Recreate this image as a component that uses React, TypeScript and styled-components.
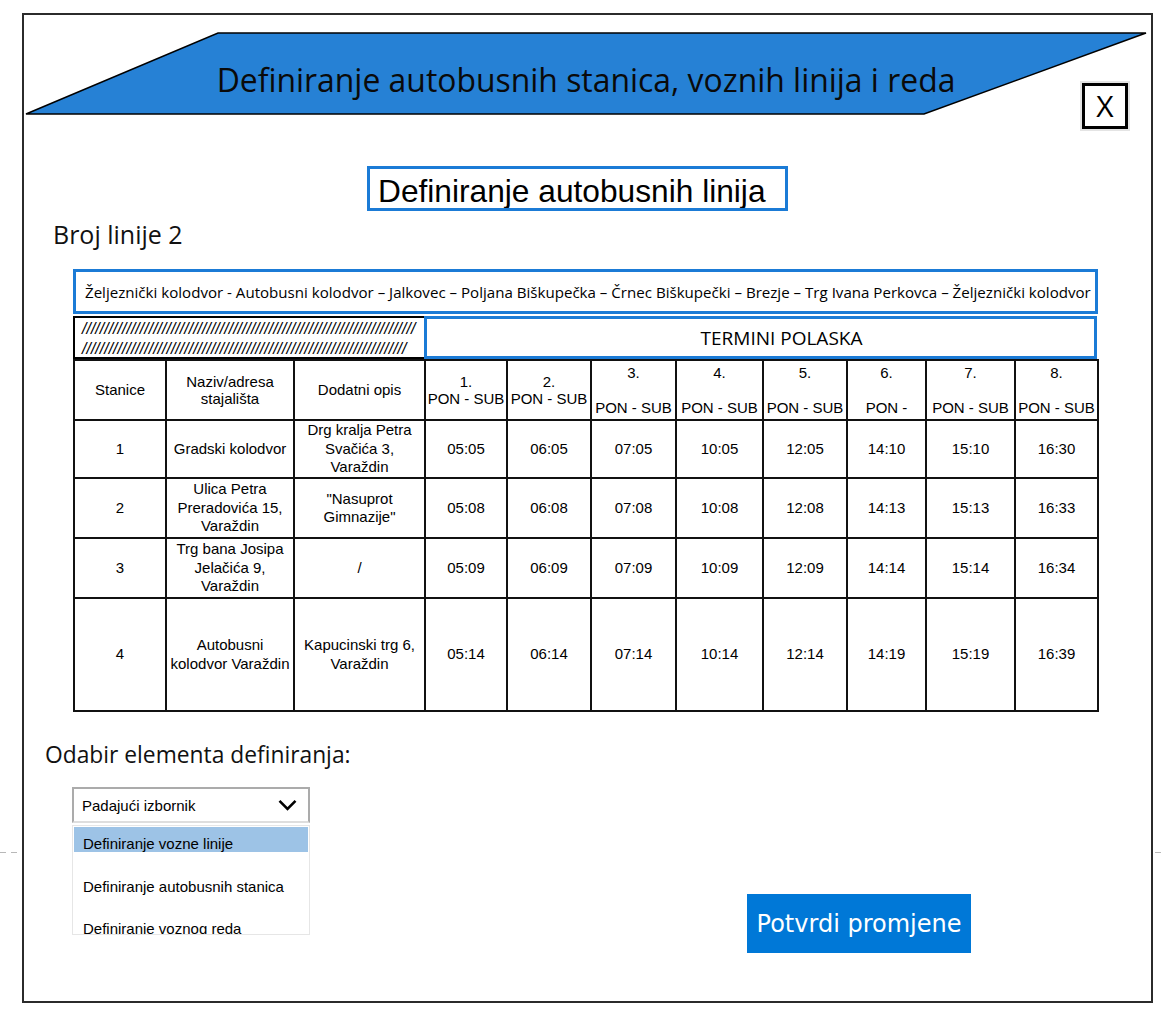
import React from "react";
import styled, { createGlobalStyle } from "styled-components";

const GlobalStyle = createGlobalStyle`
  html, body { margin: 0; padding: 0; }
  body {
    min-height: 1030px;
    background-color: #fff;
    background-image: repeating-linear-gradient(90deg, #b8b8b8 0 6px, transparent 6px 11px);
    background-size: 100% 1px;
    background-position: 0 852px;
    background-repeat: no-repeat;
    font-family: "Open Sans", "Liberation Sans", sans-serif;
    color: #000;
  }
`;

const Page = styled.div`
  padding: 13px 0 0 22px;
`;

const Frame = styled.div`
  position: relative;
  width: 1131px;
  height: 990px;
  box-sizing: border-box;
  border: 2px solid #2b2b2b;
  background: #fff;
  display: flex;
  flex-direction: column;
  align-items: flex-start;
`;

const Banner = styled.div`
  position: relative;
  margin: 17px 0 0 1px;
  width: 1122px;
  height: 83px;
  box-sizing: border-box;
  padding-top: 26px;
  display: flex;
  justify-content: center;
`;

const BannerShape = styled.svg`
  position: absolute;
  inset: 0;
  width: 100%;
  height: 100%;
`;

const BannerTitle = styled.h1`
  position: relative;
  margin: 0;
  font-family: "Open Sans", sans-serif;
  font-weight: 400;
  font-size: 31.9px;
  line-height: 44px;
  color: #0a0a0a;
  white-space: nowrap;
`;

const CloseButton = styled.button`
  position: absolute;
  top: 68px;
  right: 23px;
  width: 46px;
  height: 46px;
  box-sizing: border-box;
  border: 3px solid #000;
  box-shadow: 0 0 0 2px #e4e4e4;
  background: #fff;
  padding: 0;
  display: flex;
  align-items: center;
  justify-content: center;
  font-family: "Open Sans", sans-serif;
  font-size: 30px;
  line-height: 1;
  color: #000;
`;

const TitleBox = styled.h2`
  margin: 51px 0 0 343px;
  width: 421px;
  height: 45px;
  box-sizing: border-box;
  border: 3px solid #1b7bd6;
  padding: 5px 0 0 8px;
  font-family: "Liberation Sans", Arial, sans-serif;
  font-weight: 400;
  font-size: 31.7px;
  line-height: 35px;
  white-space: nowrap;
  overflow: hidden;
`;

const LineLabel = styled.div`
  margin: 8px 0 0 29px;
  font-family: "Open Sans", sans-serif;
  font-size: 25px;
  line-height: 31px;
  color: #111;
`;

const RouteBox = styled.div`
  margin: 19px 0 0 49px;
  width: 1025px;
  height: 45px;
  box-sizing: border-box;
  border: 3px solid #1b7bd6;
  padding-left: 9px;
  display: flex;
  align-items: center;
  font-family: "Open Sans", sans-serif;
  font-size: 15.1px;
  white-space: nowrap;
  overflow: hidden;
`;

const Strip = styled.div`
  margin: 2px 0 0 49px;
  width: 1024px;
  height: 43px;
  display: flex;
`;

const HatchCell = styled.div`
  width: 351px;
  box-sizing: border-box;
  border: 2px solid #000;
  border-right: none;
  padding: 1px 0 0 7px;
  font-family: "Liberation Sans", Arial, sans-serif;
  font-style: italic;
  font-weight: 400;
  font-size: 16px;
  line-height: 20px;
  white-space: nowrap;
  overflow: hidden;
`;

const TerminiCell = styled.div`
  flex: 1;
  box-sizing: border-box;
  border: 3px solid #1b7bd6;
  padding-left: 42px;
  display: flex;
  align-items: center;
  justify-content: center;
  font-family: "Open Sans", sans-serif;
  font-size: 19px;
`;

const Table = styled.table`
  margin-left: 49px;
  width: 1024px;
  border-collapse: collapse;
  table-layout: fixed;
  font-family: "Liberation Sans", Arial, sans-serif;
  font-size: 15px;
`;

const HeadCell = styled.th`
  border: 2px solid #111;
  padding: 0;
  height: 58px;
  font-weight: 400;
  line-height: 17.5px;
  text-align: center;
  vertical-align: middle;
  white-space: nowrap;
  overflow: hidden;
`;

const BodyCell = styled.td<{ $h: number }>`
  border: 2px solid #111;
  padding: 0;
  height: ${(p) => p.$h}px;
  line-height: 18.5px;
  text-align: center;
  vertical-align: middle;
`;

const Bottom = styled.div`
  margin: 28px 0 0 21px;
  display: grid;
  grid-template-columns: 702px 224px;
  align-items: start;
`;

const LeftCol = styled.div`
  display: flex;
  flex-direction: column;
  align-items: flex-start;
`;

const SectionLabel = styled.div`
  font-family: "Open Sans", sans-serif;
  font-size: 22.8px;
  line-height: 30px;
  color: #111;
`;

const Select = styled.div`
  margin: 17px 0 0 27px;
  width: 238px;
  height: 36px;
  box-sizing: border-box;
  border: 2px solid #ababab;
  border-bottom-color: #dedede;
  padding: 0 11px 0 8px;
  display: flex;
  align-items: center;
  justify-content: space-between;
  font-family: "Liberation Sans", Arial, sans-serif;
  font-size: 15px;
`;

const OptionList = styled.div`
  margin: 2px 0 0 27px;
  width: 238px;
  height: 110px;
  box-sizing: border-box;
  border: 1px solid #e6e6e6;
  padding: 1px;
  display: flex;
  flex-direction: column;
  gap: 17.5px;
  overflow: hidden;
`;

const Option = styled.div<{ $selected?: boolean }>`
  flex-shrink: 0;
  height: 25px;
  box-sizing: border-box;
  padding: 8px 0 0 9px;
  line-height: 17px;
  background: ${(p) => (p.$selected ? "#9dc3e6" : "transparent")};
  font-family: "Liberation Sans", Arial, sans-serif;
  font-size: 15px;
  white-space: nowrap;
`;

const ConfirmButton = styled.button`
  margin-top: 154px;
  width: 224px;
  height: 59px;
  border: none;
  padding: 0;
  background: #0078d7;
  color: #fff;
  font-family: "DejaVu Sans", sans-serif;
  font-size: 24px;
`;

const headers = [
  { n: "1.", label: "PON - SUB", spaced: false },
  { n: "2.", label: "PON - SUB", spaced: false },
  { n: "3.", label: "PON - SUB", spaced: true },
  { n: "4.", label: "PON - SUB", spaced: true },
  { n: "5.", label: "PON - SUB", spaced: true },
  { n: "6.", label: "PON -", spaced: true },
  { n: "7.", label: "PON - SUB", spaced: true },
  { n: "8.", label: "PON - SUB", spaced: true },
];

const rows = [
  {
    h: 56,
    id: "1",
    name: ["Gradski kolodvor"],
    desc: ["Drg kralja Petra", "Svačića 3,", "Varaždin"],
    times: ["05:05", "06:05", "07:05", "10:05", "12:05", "14:10", "15:10", "16:30"],
  },
  {
    h: 58,
    id: "2",
    name: ["Ulica Petra", "Preradovića 15,", "Varaždin"],
    desc: ["\"Nasuprot", "Gimnazije\""],
    times: ["05:08", "06:08", "07:08", "10:08", "12:08", "14:13", "15:13", "16:33"],
  },
  {
    h: 58,
    id: "3",
    name: ["Trg bana Josipa", "Jelačića 9,", "Varaždin"],
    desc: ["/"],
    times: ["05:09", "06:09", "07:09", "10:09", "12:09", "14:14", "15:14", "16:34"],
  },
  {
    h: 111,
    id: "4",
    name: ["Autobusni", "kolodvor Varaždin"],
    desc: ["Kapucinski trg 6,", "Varaždin"],
    times: ["05:14", "06:14", "07:14", "10:14", "12:14", "14:19", "15:19", "16:39"],
  },
];

const colWidths = [92, 128, 131, 82, 84, 85, 87, 84, 79, 89, 83];

const Lines = ({ lines }: { lines: string[] }) => (
  <>
    {lines.map((l, i) => (
      <React.Fragment key={i}>
        {i > 0 && <br />}
        {l}
      </React.Fragment>
    ))}
  </>
);

const Chevron = () => (
  <svg width="19" height="12" viewBox="0 0 19 12">
    <polyline points="1.5,1.8 9.5,9.8 17.5,1.8" fill="none" stroke="#000" strokeWidth="2.6" />
  </svg>
);

export default function App() {
  return (
    <>
      <GlobalStyle />
      <Page>
        <Frame>
          <Banner>
            <BannerShape viewBox="0 0 1122 83" preserveAspectRatio="none">
              <polygon points="193,1 1121,1 899,82 1,82" fill="#2681d5" stroke="#000" strokeWidth="1.5" />
            </BannerShape>
            <BannerTitle>Definiranje autobusnih stanica, voznih linija i reda</BannerTitle>
          </Banner>
          <CloseButton>X</CloseButton>

          <TitleBox>Definiranje autobusnih linija</TitleBox>
          <LineLabel>Broj linije 2</LineLabel>

          <RouteBox>
            Željeznički kolodvor - Autobusni kolodvor – Jalkovec – Poljana Biškupečka – Črnec Biškupečki – Brezje – Trg Ivana Perkovca – Željeznički kolodvor
          </RouteBox>

          <Strip>
            <HatchCell>
              {"/".repeat(75)}
              <br />
              {"/".repeat(73)}
            </HatchCell>
            <TerminiCell>TERMINI POLASKA</TerminiCell>
          </Strip>

          <Table>
            <colgroup>
              {colWidths.map((w, i) => (
                <col key={i} style={{ width: w }} />
              ))}
            </colgroup>
            <thead>
              <tr>
                <HeadCell>Stanice</HeadCell>
                <HeadCell>
                  Naziv/adresa
                  <br />
                  stajališta
                </HeadCell>
                <HeadCell>Dodatni opis</HeadCell>
                {headers.map((h) => (
                  <HeadCell key={h.n}>
                    {h.n}
                    <br />
                    {h.spaced && <br />}
                    {h.label}
                  </HeadCell>
                ))}
              </tr>
            </thead>
            <tbody>
              {rows.map((r) => (
                <tr key={r.id}>
                  <BodyCell $h={r.h}>{r.id}</BodyCell>
                  <BodyCell $h={r.h}>
                    <Lines lines={r.name} />
                  </BodyCell>
                  <BodyCell $h={r.h}>
                    <Lines lines={r.desc} />
                  </BodyCell>
                  {r.times.map((t, i) => (
                    <BodyCell $h={r.h} key={i}>
                      {t}
                    </BodyCell>
                  ))}
                </tr>
              ))}
            </tbody>
          </Table>

          <Bottom>
            <LeftCol>
              <SectionLabel>Odabir elementa definiranja:</SectionLabel>
              <Select>
                <span>Padajući izbornik</span>
                <Chevron />
              </Select>
              <OptionList>
                <Option $selected>Definiranje vozne linije</Option>
                <Option>Definiranje autobusnih stanica</Option>
                <Option>Definiranje voznog reda</Option>
              </OptionList>
            </LeftCol>
            <ConfirmButton>Potvrdi promjene</ConfirmButton>
          </Bottom>
        </Frame>
      </Page>
    </>
  );
}
